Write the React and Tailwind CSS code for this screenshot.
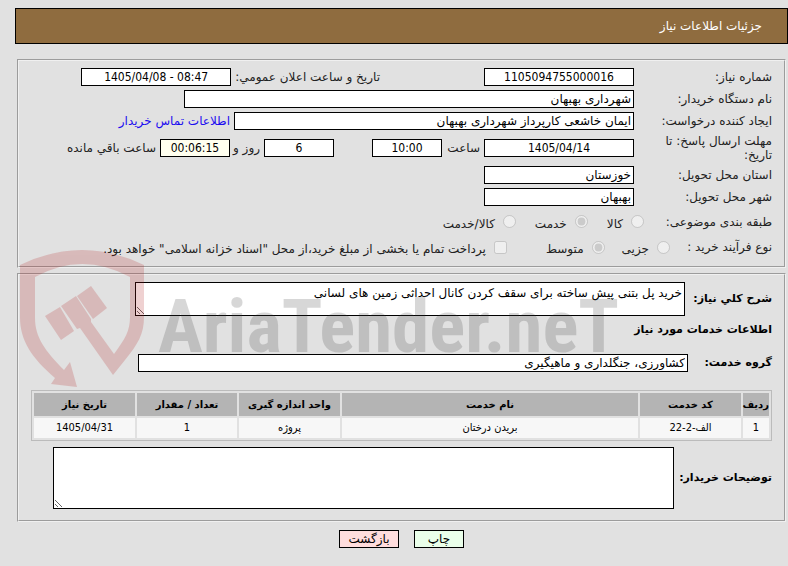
const fieldBase = "h-[18px] border border-black px-[2px] leading-4 text-xs text-black";
const digits = "font-['DejaVu_Sans_Condensed','DejaVu_Sans',sans-serif] text-center [direction:ltr]";

function Field({ id, label, value, className }) {
  return (
    <input id={id} aria-label={label} readOnly defaultValue={value} className={`${fieldBase} ${className}`} />
  );
}

function Row({ label, htmlFor, className = "h-[22px]", children }) {
  return (
    <div className={`flex items-center ${className}`}>
      <label htmlFor={htmlFor} className="w-[138px] shrink-0 pe-6 leading-[14px]">{label}</label>
      {children}
    </div>
  );
}

function Choice({ type = "radio", name, label, checked, className = "" }) {
  return (
    <label className={`flex items-center gap-2 whitespace-nowrap ${className}`}>
      <input type={type} name={name} disabled defaultChecked={checked} className="m-0 size-[13px]" />
      <span className="pt-1 leading-4">{label}</span>
    </label>
  );
}

function Watermark() {
  return (
    <svg
      viewBox="0 0 604 140"
      className="pointer-events-none absolute -top-6 left-0 h-[140px] w-[604px] overflow-visible opacity-20"
      aria-hidden="true"
      direction="ltr"
    >
      <g fill="#b41e1e">
        <path d="M1 14 Q63 -16 125 14 V66 C125 83 119 93 106 109 L94 124 L61 77 L58 78 L42 55 L57 45 L72 68 L72 71 L95 103 C106 88 111 80 111 66 V26 Q63 0 16 26 V67 C16 86 26 100 45 119 L51 111 L58 136 L32 133 L36 127 C13 107 1 90 1 66 Z" />
        <path d="M26 65 L41 56 L55 80 L42 89 Z" />
        <path d="M58 45 L72 35 L88 57 L74 68 Z" />
      </g>
      <text x="139" y="101" fill="#3c3c3c" fontSize="75" fontWeight="700" className="font-['Roboto_Condensed','Roboto',sans-serif]">
        AriaTender.neT
      </text>
    </svg>
  );
}

const columns = [
  ["ردیف", "w-[26px]"],
  ["کد خدمت", "w-[101px]"],
  ["نام خدمت", ""],
  ["واحد اندازه گیری", "w-[101px]"],
  ["تعداد / مقدار", "w-[100px]"],
  ["تاریخ نیاز", "w-[101px]"],
];
const rows = [["1", "الف-2-22", "بریدن درختان", "پروژه", "1", "1405/04/31"]];

export default function App() {
  return (
    <div dir="rtl" className="min-h-screen bg-[#e1e1e1] pt-2 pb-[18px] font-['DejaVu_Sans',sans-serif] text-xs text-[#222]">
      <header className="me-[15px] flex h-9 items-center border border-black bg-[#8f6c3f] px-[25px] text-white">
        <h1>جزئیات اطلاعات نیاز</h1>
      </header>

      <main className="ms-[2px] me-[17px] mt-[15px]">
        <fieldset className="border-2 border-[#f0f0f0] px-3 pt-[5px] pb-[7px] [border-style:groove]">
          <Row label="شماره نیاز:" htmlFor="need-no">
            <Field id="need-no" value="1105094755000016" className={`w-[150px] bg-white ${digits}`} />
            <label htmlFor="announce" className="ms-[104px] me-1 whitespace-nowrap">تاریخ و ساعت اعلان عمومي:</label>
            <Field id="announce" value="1405/04/08 - 08:47" className={`w-[150px] bg-white ${digits}`} />
          </Row>
          <Row label="نام دستگاه خریدار:" htmlFor="buyer">
            <Field id="buyer" value="شهرداری بهبهان" className="w-[450px] bg-white" />
          </Row>
          <Row label="ایجاد کننده درخواست:" htmlFor="creator">
            <Field id="creator" value="ایمان خاشعی کارپرداز شهرداری بهبهان" className="w-[400px] bg-white" />
            <a href="#contact" className="ms-1 text-[#1c0cf0]">اطلاعات تماس خریدار</a>
          </Row>
          <Row label="مهلت ارسال پاسخ: تا تاریخ:" htmlFor="deadline" className="h-8 whitespace-nowrap [&>label:first-child]:whitespace-normal">
            <Field id="deadline" value="1405/04/14" className={`w-[150px] bg-white ${digits}`} />
            <label htmlFor="hour" className="ms-1 w-[38px]">ساعت</label>
            <Field id="hour" value="10:00" className={`w-[70px] bg-white ${digits}`} />
            <Field label="روز" value="6" className={`mr-[38px] w-[70px] bg-white ${digits}`} />
            <span className="ms-1 w-[30px]">روز و</span>
            <Field id="remaining" value="00:06:15" className={`w-[70px] bg-[#ffffef] ${digits}`} />
            <label htmlFor="remaining" className="ms-1">ساعت باقي مانده</label>
          </Row>
          <Row label="استان محل تحویل:" htmlFor="province">
            <Field id="province" value="خوزستان" className="w-[150px] bg-white" />
          </Row>
          <Row label="شهر محل تحویل:" htmlFor="city">
            <Field id="city" value="بهبهان" className="w-[150px] bg-white" />
          </Row>
          <div role="radiogroup" aria-labelledby="subject" className="flex h-[27px] items-center">
            <span id="subject" className="w-32 shrink-0">طبقه بندی موضوعی:</span>
            <Choice name="subject" label="کالا" />
            <Choice name="subject" label="خدمت" checked className="ms-[19px]" />
            <Choice name="subject" label="کالا/خدمت" className="ms-[19px]" />
          </div>
          <div role="radiogroup" aria-labelledby="process" className="flex h-6 items-center">
            <span id="process" className="w-[102px] shrink-0">نوع فرآیند خرید :</span>
            <Choice name="process" label="جزیی" />
            <Choice name="process" label="متوسط" checked className="ms-[17px]" />
            <Choice type="checkbox" label={'پرداخت تمام یا بخشی از مبلغ خرید،از محل "اسناد خزانه اسلامی" خواهد بود.'} className="ms-[39px]" />
          </div>
        </fieldset>

        <fieldset className="relative mt-[5px] border-2 border-[#f0f0f0] px-3 pt-[7px] pb-[11px] [border-style:groove]">
          <div className="flex items-center">
            <label htmlFor="summary" className="w-[87px] shrink-0 text-[11px] font-bold text-black">شرح کلي نیاز:</label>
            <textarea id="summary" readOnly defaultValue="خرید پل بتنی پیش ساخته برای سقف کردن کانال احداثی زمین های لسانی" className="block h-[34px] w-[550px] border border-black bg-white p-[2px] leading-4 text-black" />
          </div>
          <h2 className="mt-1 h-5 text-[11px] leading-5 font-bold text-black">اطلاعات خدمات مورد نیاز</h2>
          <div className="mt-[14px] flex items-center">
            <label htmlFor="group" className="w-[84px] shrink-0 text-[11px] font-bold text-black">گروه خدمت:</label>
            <Field id="group" value="کشاورزی، جنگلداری و ماهیگیری" className="w-[550px] bg-white" />
          </div>
          <table className="mt-[18px] w-full table-fixed border-separate border-spacing-[2px] border border-[#bbb] text-center text-[11px] leading-4 text-black">
            <thead>
              <tr className="h-[23px] bg-[#b4b4b4] text-[10px]">
                {columns.map(([name, width]) => (
                  <th key={name} className={`p-0 whitespace-nowrap ${width}`}>{name}</th>
                ))}
              </tr>
            </thead>
            <tbody>
              {rows.map((row) => (
                <tr key={row[0]} className="h-5 bg-[#f7f7f7] font-['DejaVu_Sans_Condensed','DejaVu_Sans',sans-serif]">
                  {row.map((cell, i) => (
                    <td key={i} className="p-0">{cell}</td>
                  ))}
                </tr>
              ))}
            </tbody>
          </table>
          <div className="mt-[6px] flex items-center">
            <label htmlFor="notes" className="w-[98px] shrink-0 text-[11px] font-bold text-black">توضیحات خریدار:</label>
            <textarea id="notes" readOnly className="block h-[62px] w-[621px] border border-black bg-white p-[2px]" />
          </div>
          <Watermark />
        </fieldset>

        <div className="mt-2 flex justify-center gap-[15px] text-black">
          <button type="button" className="h-[18px] w-[50px] border border-black bg-[#eaffea] leading-4">چاپ</button>
          <button type="button" className="h-[18px] w-[60px] border border-black bg-[#ffdddd] leading-4">بازگشت</button>
        </div>
      </main>
    </div>
  );
}
